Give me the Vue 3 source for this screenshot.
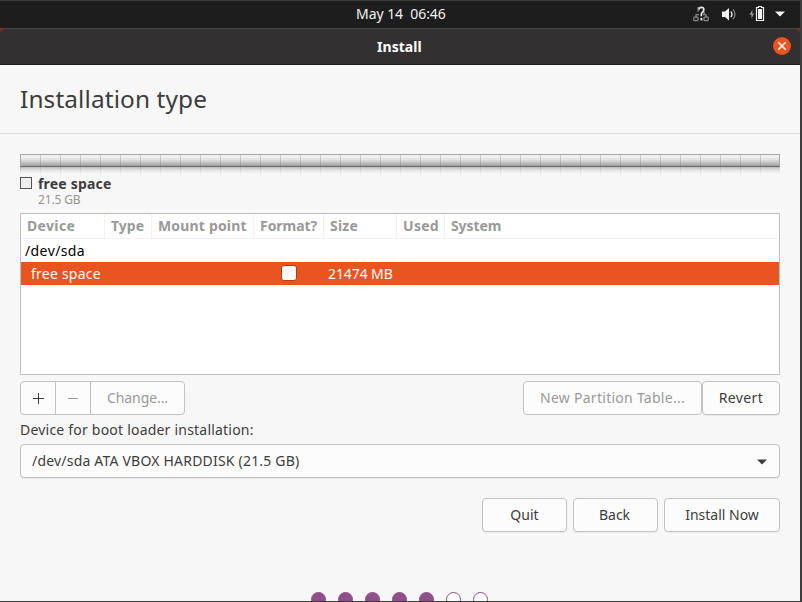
<script setup>
const columns = [
  { key: 'device', label: 'Device' },
  { key: 'type', label: 'Type' },
  { key: 'mount', label: 'Mount point' },
  { key: 'format', label: 'Format?' },
  { key: 'size', label: 'Size' },
  { key: 'used', label: 'Used' },
  { key: 'system', label: 'System' },
]
const steps = [true, true, true, true, true, false, false]
</script>

<template>
  <div class="screen">
    <header class="topbar">
      <span class="clock">May 14&nbsp; 06:46</span>
      <div class="tray">
        <svg class="net" width="16" height="16" viewBox="0 0 16 16" fill="none">
          <g stroke="#8a8a8a" stroke-width="1.2">
            <path d="M6 1.6H5V6M11.2 5.6V8M3 11V8.6h3M13 11V8.6h-3" />
            <rect x=".8" y="11.1" width="4.2" height="3.6" rx=".6" />
            <rect x="11" y="11.1" width="4.2" height="3.6" rx=".6" />
          </g>
          <path d="M6 3.6C6.2 2 7.2 1.4 8.3 1.4c1.5 0 2.5.9 2.5 2.3 0 2.3-2.5 2.7-2.5 5.1v1.4" stroke="#e8e8e8" stroke-width="1.7" />
          <rect x="7.4" y="12" width="2" height="2.4" fill="#e8e8e8" />
        </svg>
        <svg class="vol" width="16" height="16" viewBox="0 0 16 16" fill="none">
          <path d="M1 5.5h3L8 2v12.4L4 11H1z" fill="#f2f2f2" />
          <path d="M9.8 5.4c1.3 1.6 1.3 4.2 0 5.8" stroke="#f2f2f2" stroke-width="1.3" />
          <path d="M12 3.4c2.6 2.6 2.6 7 0 9.6" stroke="#8a8a8a" stroke-width="1.2" />
        </svg>
        <svg class="bat" width="16" height="16" viewBox="0 0 16 16">
          <path d="M3.6 3.6.4 8.8h2.1v4L5 7.4H3.2z" fill="#9a9a9a" />
          <path d="M9.5 1.5v-1h3v1h2v13h-7v-13z" fill="none" stroke="#f2f2f2" stroke-width="1.2" />
          <rect x="9" y="3" width="4" height="10" fill="#f2f2f2" />
        </svg>
        <svg class="caret" width="10" height="6" viewBox="0 0 10 6">
          <path d="M0 .4h10L5 5.4z" fill="#f2f2f2" />
        </svg>
      </div>
    </header>

    <section class="window">
      <div class="titlewrap">
        <div class="titlebar">
          <span class="wintitle">Install</span>
          <button class="close" aria-label="Close">
            <svg width="18" height="18" viewBox="0 0 18 18">
              <path d="M5.3 5.3l7.4 7.4M12.7 5.3l-7.4 7.4" stroke="#fff" stroke-width="1.5" />
            </svg>
          </button>
        </div>
      </div>

      <h1 class="heading">Installation type</h1>

      <main class="body">
        <div class="diskbar"></div>
        <div class="reflection"></div>

        <div class="legend">
          <i class="swatch"></i>
          <div>
            <div class="name">free space</div>
            <div class="amount">21.5 GB</div>
          </div>
        </div>

        <div class="table">
          <div class="row head">
            <span v-for="c in columns" :key="c.key" class="cell" :class="c.key">{{ c.label }}</span>
          </div>
          <div class="row disk"><span>/dev/sda</span></div>
          <div class="row selected">
            <span class="part">free space</span>
            <i class="check"></i>
            <span class="mb">21474 MB</span>
          </div>
        </div>

        <div class="tools">
          <div class="group">
            <button class="btn add" aria-label="Add">
              <svg width="11" height="11" viewBox="0 0 11 11"><path d="M5.5 0v11M0 5.5h11" stroke="#3d3d3d" /></svg>
            </button>
            <button class="btn remove" aria-label="Remove">
              <svg width="11" height="11" viewBox="0 0 11 11"><path d="M0 5.5h10" stroke="#9a9a9a" /></svg>
            </button>
            <button class="btn change">Change...</button>
          </div>
          <div class="right">
            <button class="btn newtable">New Partition Table...</button>
            <button class="btn revert">Revert</button>
          </div>
        </div>

        <div class="bootlabel">Device for boot loader installation:</div>
        <div class="combo">
          <span>/dev/sda ATA VBOX HARDDISK (21.5 GB)</span>
          <svg width="10" height="6" viewBox="0 0 10 6"><path d="M0 .5h10L5 5.5z" fill="#3d3d3d" /></svg>
        </div>

        <div class="actions">
          <button class="btn quit">Quit</button>
          <button class="btn back">Back</button>
          <button class="btn install">Install Now</button>
        </div>
      </main>

      <footer class="steps">
        <i v-for="(done, i) in steps" :key="i" :class="{ done }"></i>
      </footer>
    </section>
  </div>
</template>

<style>
body { overflow: hidden; }
</style>

<style scoped>
* { box-sizing: border-box; }
.screen {
  width: 802px;
  height: 602px;
  overflow: hidden;
  display: flex;
  flex-direction: column;
  background: #f7f7f7;
  border: solid #3c3c3c;
  border-width: 1px 2px 1px 0;
  font: 14px/20px "Noto Sans", "Open Sans", sans-serif;
  letter-spacing: 0.23px;
  color: #3d3d3d;
  white-space: nowrap;
}
.topbar {
  display: grid;
  grid-template-columns: 356px 1fr auto;
  align-items: start;
  flex: none;
  height: 27px;
  padding-top: 3px;
  background: #1d1d1d;
  color: #f2f2f2;
}
.clock { grid-column: 2; letter-spacing: -0.05px; }
.tray { display: flex; align-items: flex-start; padding: 2px 15px 0 0; }
.net { margin-right: 12px; }
.vol { margin-right: 12px; }
.bat { margin-right: 10px; }
.caret { margin-top: 5px; }
.window { flex: 1; min-height: 0; display: flex; flex-direction: column; }
.titlewrap { flex: none; background: #a01c1c; }
.titlebar {
  height: 37px;
  display: grid;
  grid-template-columns: 377px 1fr auto;
  align-items: center;
  background: #333031;
  border-top: 1px solid #484646;
  border-bottom: 1px solid #1c1b1b;
  border-radius: 5px 5px 0 0;
  color: #fff;
}
.wintitle { grid-column: 2; font-weight: 700; letter-spacing: 0.05px; }
.close {
  width: 18px;
  height: 18px;
  margin: -1px 9px 0 0;
  padding: 0;
  border: 0;
  border-radius: 50%;
  background: #e95420;
}
.close svg { display: block; }
.heading {
  flex: none;
  margin: 0;
  height: 69px;
  padding: 17px 20px 0;
  border-bottom: 1px solid #dcdcdc;
  font-size: 24.4px;
  line-height: 34px;
  font-weight: 400;
  letter-spacing: 0.12px;
}
.body { flex: none; padding: 20px 20px 0; }
.diskbar {
  height: 13px;
  border: 1px solid #a5a5a5;
  border-bottom: 1px solid #686868;
  background:
    repeating-linear-gradient(90deg, transparent 0 19px, rgba(120, 120, 120, 0.3) 19px 20px),
    linear-gradient(#f4f4f4, #e8e8e8 35%, #a0a0a0);
}
.reflection {
  height: 8px;
  background:
    linear-gradient(rgba(247, 247, 247, 0), #f7f7f7),
    repeating-linear-gradient(90deg, rgba(150, 150, 150, 0.4) 0 1px, transparent 1px 20px),
    linear-gradient(#bcbcbc, #f7f7f7);
}
.legend { display: flex; height: 38px; }
.swatch { width: 12px; height: 12px; margin: 2px 6px 0 0; border: 1px solid #555; background: #eee; }
.name { height: 19px; margin-top: -1px; font-weight: 700; letter-spacing: 0.2px; }
.amount { font-size: 12px; line-height: 14px; letter-spacing: -0.15px; color: #959595; }
.table { height: 162px; border: 1px solid #bfbfbf; background: #fff; }
.row { display: flex; align-items: center; height: 23px; }
.head { height: 25px; border-bottom: 1px solid #f2f2f2; color: #999; font-weight: 700; }
.cell { height: 24px; line-height: 23px; padding-left: 6px; border-right: 1px solid #f2f2f2; }
.device { width: 84px; letter-spacing: 0.35px; }
.type { width: 47px; letter-spacing: 0; }
.mount { width: 102px; letter-spacing: 0.17px; }
.format { width: 70px; letter-spacing: -0.05px; }
.size { width: 73px; }
.used { width: 48px; letter-spacing: 0.3px; }
.system { border-right: 0; letter-spacing: -0.1px; }
.disk { padding-left: 4px; color: #000; letter-spacing: 0.4px; }
.selected { background: #e95420; color: #fff; }
.part { width: 251px; padding-left: 10px; }
.check { width: 16px; height: 16px; margin: -1px 31px 0 9px; border: 1px solid #b33c10; border-radius: 3px; background: #fafafa; }
.mb { letter-spacing: -0.1px; }
.tools { display: flex; justify-content: space-between; margin-top: 6px; }
.group, .right { display: flex; }
.btn {
  display: flex;
  align-items: center;
  justify-content: center;
  height: 34px;
  padding: 0 0 1px;
  border: 1px solid #c2c2c2;
  border-radius: 4px;
  background: #fcfcfc;
  color: inherit;
  font: inherit;
  letter-spacing: inherit;
}
.group .btn { padding-bottom: 0; }
.add { width: 36px; border-radius: 4px 0 0 4px; }
.add svg, .remove svg { margin-top: 1px; }
.remove { width: 36px; margin-left: -1px; border-radius: 0; }
.group .change { width: 95px; margin-left: -1px; padding-bottom: 1px; border-radius: 0 4px 4px 0; color: #999; letter-spacing: -0.1px; }
.newtable { width: 179px; color: #999; letter-spacing: 0.27px; }
.revert { width: 78px; letter-spacing: 0.38px; box-shadow: 0 1px 1px rgba(0, 0, 0, 0.06); }
.bootlabel { height: 29px; padding-top: 5px; letter-spacing: 0.21px; }
.combo {
  display: flex;
  align-items: center;
  justify-content: space-between;
  height: 34px;
  padding: 0 12px 1px 11px;
  border: 1px solid #c2c2c2;
  border-radius: 4px;
  background: #fcfcfc;
  box-shadow: 0 1px 1px rgba(0, 0, 0, 0.06);
  letter-spacing: 0.2px;
}
.combo svg { margin-top: 2px; }
.actions { display: flex; justify-content: flex-end; gap: 6px; margin-top: 20px; }
.actions .btn { width: 85px; letter-spacing: 0; box-shadow: 0 1px 1px rgba(0, 0, 0, 0.06); }
.actions .back { padding-right: 2px; }
.actions .install { width: 116px; }
.steps { display: flex; gap: 12px; margin: 60px 0 0 311px; }
.steps i { flex: none; width: 15px; height: 15px; border: 1px solid #924d8b; border-radius: 50%; background: #fff; }
.steps .done { background: #924d8b; }
</style>
